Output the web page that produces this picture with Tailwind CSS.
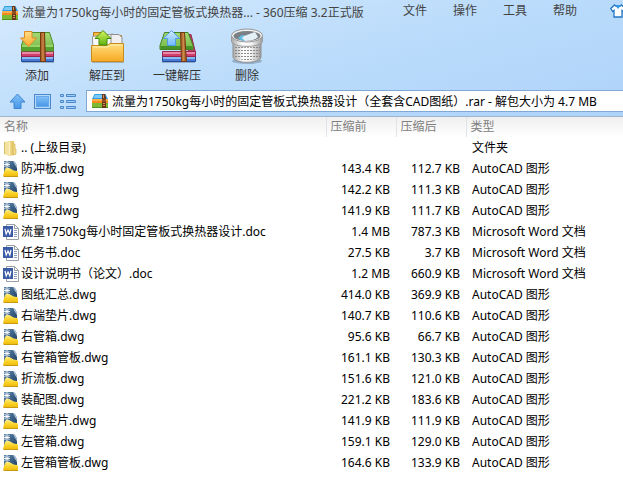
<!DOCTYPE html>
<html lang="zh-CN">
<head>
<meta charset="utf-8">
<meta name="viewport" content="width=device-width, initial-scale=1">
<title>360压缩</title>
<script src="https://cdn.jsdelivr.net/npm/@tailwindcss/browser@4"></script>
</head>
<body class="min-h-screen overflow-x-hidden bg-white font-['Noto_Sans','Noto_Sans_CJK_SC',sans-serif] text-[12px] leading-4 text-black">
<svg width="0" height="0" class="absolute" aria-hidden="true">
  <defs>
    <linearGradient id="green" x1="0" y1="0" x2="0" y2="1"><stop offset="0" stop-color="#a5d877"/><stop offset="1" stop-color="#74b944"/></linearGradient>
    <linearGradient id="orange" x1="0" y1="0" x2="0" y2="1"><stop offset="0" stop-color="#ffdc84"/><stop offset="1" stop-color="#fba92c"/></linearGradient>
    <linearGradient id="blue" x1="0" y1="0" x2="0" y2="1"><stop offset="0" stop-color="#cfeaff"/><stop offset="1" stop-color="#6fbafa"/></linearGradient>
    <linearGradient id="lime" x1="0" y1="0" x2="0" y2="1"><stop offset="0" stop-color="#d8f560"/><stop offset="1" stop-color="#62b414"/></linearGradient>
    <linearGradient id="folder" x1="0" y1="0" x2="0" y2="1"><stop offset="0" stop-color="#ffdf7d"/><stop offset="1" stop-color="#f7a823"/></linearGradient>
    <linearGradient id="strap" x1="0" y1="0" x2="1" y2="0"><stop offset="0" stop-color="#94511f"/><stop offset=".5" stop-color="#cd8746"/><stop offset="1" stop-color="#8a4819"/></linearGradient>
    <linearGradient id="steel" x1="0" y1="0" x2="1" y2="0"><stop offset="0" stop-color="#a8a8a8"/><stop offset=".35" stop-color="#ffffff"/><stop offset=".65" stop-color="#f4f4f4"/><stop offset="1" stop-color="#9c9c9c"/></linearGradient>
    <linearGradient id="nav" x1="0" y1="0" x2="0" y2="1"><stop offset="0" stop-color="#83c0f8"/><stop offset="1" stop-color="#4796e6"/></linearGradient>
    <linearGradient id="oldfolder" x1="0" y1="0" x2="1" y2="0"><stop offset="0" stop-color="#f3dd8c"/><stop offset="1" stop-color="#e0c366"/></linearGradient>
    <linearGradient id="cad" x1="0" y1="0" x2="1" y2="1"><stop offset="0" stop-color="#5f88ae"/><stop offset="1" stop-color="#1d3d60"/></linearGradient>
    <linearGradient id="gold" x1="0" y1="0" x2="0" y2="1"><stop offset="0" stop-color="#ffee8a"/><stop offset=".5" stop-color="#fbd52e"/><stop offset="1" stop-color="#efbd0c"/></linearGradient>
    <pattern id="mesh" width="3" height="3" patternUnits="userSpaceOnUse"><rect x="0" y="1" width="2" height="1" fill="#888"/></pattern>
  </defs>
  <symbol id="i-rar" viewBox="0 0 16 16">
    <path d="M2.500 1h11L16 6v1H0V6z" fill="#2f9fe8"/><path d="M3 2h7v3H1.500z" fill="#7cc9f8"/>
    <rect x="0" y="6" width="16" height="5" fill="#f58a1f"/><rect x="0" y="6" width="16" height="2" fill="#fcae4e"/>
    <rect x="0" y="10" width="16" height="5" fill="#7cba35"/><rect x="0" y="14" width="16" height="1" fill="#4f9220"/>
    <path d="M10 1h3l1 4v10h-4z" fill="#6b3517"/><path d="M11 2h1v3h-1zM11 10h2v1h-2zM11 12h2v1h-2z" fill="#d4965a"/>
    <rect x="10" y="6" width="4" height="3" fill="#8f4d22"/>
  </symbol>
  <symbol id="i-add" viewBox="0 0 36 36">
    <path d="M3 34h32v1H3z" fill="#2d3a5e" opacity=".3"/>
    <path d="M2.500 28.500h32v5h-32z" fill="#477bd4" stroke="#254a9b"/><path d="M3 29h31v2H3z" fill="#8db8f4"/>
    <path d="M2.500 23.500h32v5h-32z" fill="#cf3f6c" stroke="#98264c"/><path d="M3 24h31v2H3z" fill="#ea88a8"/>
    <path d="M7 4.500h23.500l4 12.500v6h-32v-6z" fill="url(#green)" stroke="#4a8f29"/><path d="M3 17h31v2H3z" fill="#9bd36a"/><path d="M3 19h31v4H3z" fill="#54a32e"/>
    <path d="M21.500 4.500h4l1 29h-5z" fill="url(#strap)" stroke="#74390f"/>
    <path d="M5.500 3.500H13v6.500h4.500L9.500 18.500 1.500 10h4z" fill="url(#orange)" stroke="#e08a22"/>
  </symbol>
  <symbol id="i-to" viewBox="0 0 36 36">
    <path d="M3 34h32v1H3z" fill="#54421b" opacity=".3"/>
    <path d="M4.500 4.500h8l2 3h18v18h-28z" fill="#f4ba44" stroke="#b97912"/>
    <path d="M3.500 8.500 24 6l3 18-23 2z" fill="#fafafa" stroke="#999"/><path d="M22 6.500h8l3 3v13H22z" fill="#efefef" stroke="#8f8f8f"/>
    <path d="M2.500 17.500H18l3-2h13.500v18h-32z" fill="url(#folder)" stroke="#c98a1f"/><path d="M4 19h15l3-2h11" fill="none" stroke="#fff0ad"/>
    <path d="M14 2.500 22 10.500h-4v6.500h-8v-6.500H6z" fill="url(#lime)" stroke="#418b0b"/>
  </symbol>
  <symbol id="i-one" viewBox="0 0 38 36">
    <path d="M4 34h33v1H4z" fill="#2d3a5e" opacity=".3"/>
    <path d="M31 6.500h2l4.500 18v4H30z" fill="#c13e66" stroke="#98264c"/>
    <path d="M4.500 28.500h33v5h-33z" fill="#477bd4" stroke="#254a9b"/><path d="M5 29h32v2H5z" fill="#8db8f4"/>
    <path d="M4.500 23.500h33v5h-33z" fill="#cf3f6c" stroke="#98264c"/><path d="M5 24h32v2H5z" fill="#ea88a8"/>
    <path d="M6.500 4.500H30l5 13v4h-33v-4z" fill="url(#green)" stroke="#3f8422"/><path d="M2.500 18h32v3h-32z" fill="#469326"/>
    <path d="M22.500 4.500h4l2 29h-5z" fill="url(#strap)" stroke="#74390f"/>
    <path d="M13.500 2.500 21.500 10.500h-4v7h-8v-7H5.500z" fill="url(#blue)" stroke="#4f9ae8"/>
  </symbol>
  <symbol id="i-bin" viewBox="0 0 36 36">
    <ellipse cx="18" cy="33" rx="15" ry="3" fill="#31455b" opacity=".3"/>
    <path d="M4 13v16c0 7 28 7 28 0V13z" fill="url(#steel)" stroke="#909090"/>
    <path d="M5 17c5 3 21 3 26 0v12c-3 4-23 4-26 0z" fill="url(#mesh)"/>
    <path d="M2.500 7.500v6c1 6.500 30 6.500 31 0v-6z" fill="url(#steel)" stroke="#999"/>
    <ellipse cx="18" cy="7.500" rx="15.500" ry="6.500" fill="#f1f1f1" stroke="#999"/>
    <ellipse cx="18" cy="8" rx="13.500" ry="5" fill="#7b8085"/>
    <path d="M9 10l4-3 5 1-2 5c-3 0-5-1-7-3z" fill="#64bde4"/><path d="M15 8l11-4 3 5c-3 3-8 4-13 4l-3-3z" fill="#e3f0f8"/>
  </symbol>
  <symbol id="i-folder" viewBox="0 0 16 16">
    <path d="M1 2 6 1v15l-5-2z" fill="#f4e3a0"/><path d="M1 2h1v12H1z" fill="#d9c067"/><path d="M6 1h5v14l-5 1z" fill="url(#oldfolder)"/><path d="M10 4h2v4l1 1v5l-3 1z" fill="#f0d888" stroke="#d3b553" stroke-width=".7"/><path d="M6.500 2v13" stroke="#fff5c8"/>
  </symbol>
  <symbol id="i-dwg" viewBox="0 0 16 16">
    <path d="M1 0h9c3 1 4 4 4 8v5H1z" fill="url(#cad)"/><path d="M10 0c3 1 4 4 4 7l-2-3z" fill="#a9c0d4"/>
    <path d="M4 0v7M1 3.500h6M1.500 1l5 5M6.500 1l-5 5" stroke="#fff" stroke-width=".9"/>
    <path d="M0 15 2 8c2-2 4-1 6 0s3 2 6 2l1 1v4z" fill="url(#gold)"/><path d="M0 15h15v1H1z" fill="#c79a12"/>
  </symbol>
  <symbol id="i-doc" viewBox="0 0 16 16">
    <path d="M3.500.5h8l4 4v11h-12z" fill="#fff" stroke="#9a9fa7"/><path d="M11.500.5v4h4" fill="none" stroke="#9a9fa7"/>
    <path d="M11 6.500h3M11 8.500h3M11 10.500h3M11 12.500h3" stroke="#8b9cc0"/>
    <rect x="0" y="2" width="10" height="11" fill="#3c5ba6"/><path d="m2 5 1.200 5L5 6l1.800 4L8 5" fill="none" stroke="#fff" stroke-width="1.200"/>
  </symbol>
</svg>

<header class="border-b border-[#9fb6cd] bg-linear-165 from-[#d6eafd] via-[#bbdcfb] via-50% to-[#aed3f9]">
  <div class="flex h-[25px] items-center pl-[2px] text-[#444]">
    <svg class="mr-1 size-4 shrink-0"><use href="#i-rar"/></svg>
    <h1 class="w-[381px] shrink-0 whitespace-nowrap">流量为1750kg每小时的固定管板式换热器... - 360压缩 3.2正式版</h1>
    <nav class="flex shrink-0 pb-[3px]">
      <button class="mr-[26px] w-6 whitespace-nowrap">文件</button>
      <button class="mr-[26px] w-6 whitespace-nowrap">操作</button>
      <button class="mr-[26px] w-6 whitespace-nowrap">工具</button>
      <button class="mr-[26px] w-6 whitespace-nowrap">帮助</button>
    </nav>
    <button class="mb-1 ml-[7px] w-4 shrink-0" aria-label="皮肤">
      <svg class="h-[14px] w-4" viewBox="0 0 16 14"><path d="M4.500 1 .8 4.500l2 3L4 6.500V13h8V6.500l1.200 1 2-3L11.500 1C10 3 6 3 4.500 1z" fill="#fff" stroke="#2375c4" stroke-width="1.300"/><path d="M5 1h6L8 5z" fill="#3396e6"/></svg>
    </button>
  </div>
  <div class="flex h-[61px] pl-[2px] pt-[3px] text-[#333]">
    <button class="flex w-[70px] flex-col items-center gap-1"><svg class="h-9 w-9"><use href="#i-add"/></svg><span>添加</span></button>
    <button class="flex w-[70px] flex-col items-center gap-1"><svg class="h-9 w-9"><use href="#i-to"/></svg><span>解压到</span></button>
    <button class="flex w-[70px] flex-col items-center gap-1"><svg class="h-9 w-[38px]"><use href="#i-one"/></svg><span>一键解压</span></button>
    <button class="flex w-[70px] flex-col items-center gap-1"><svg class="h-9 w-9"><use href="#i-bin"/></svg><span>删除</span></button>
  </div>
  <div class="flex h-[30px] items-center pl-[9px]">
    <button aria-label="上级目录" class="mr-2"><svg class="size-[17px]" viewBox="0 0 17 17"><path d="M8.500 1 16 9h-4v6.500H5V9H1z" fill="url(#nav)" stroke="#3e86d3"/></svg></button>
    <button aria-label="预览" class="mr-2"><svg class="h-[17px] w-[17px]" viewBox="0 0 17 17"><rect x=".5" y="1.500" width="16" height="14" fill="#b5d9fb" stroke="#4a88cb"/><rect x="2.500" y="3.500" width="12" height="10" fill="url(#nav)" stroke="#68a8e8"/></svg></button>
    <button aria-label="列表" class="mr-[10px]"><svg class="h-[17px] w-[17px]" viewBox="0 0 17 17"><g fill="#9fcdf8" stroke="#4a88cb"><path d="M1.500 1.500h3v2h-3zM1.500 7.500h3v2h-3zM1.500 13.500h3v2h-3z"/><path d="M7.500 1.500h9v2h-9zM7.500 7.500h9v2h-9zM7.500 13.500h9v2h-9z"/></g></svg></button>
    <label class="flex h-[22px] min-w-0 flex-1 items-center border border-r-0 border-[#7fa8d2] bg-white pl-[5px]">
      <svg class="mr-1 size-4 shrink-0"><use href="#i-rar"/></svg>
      <input aria-label="路径" class="min-w-0 flex-1 bg-transparent pt-px outline-none" value="流量为1750kg每小时的固定管板式换热器设计（全套含CAD图纸）.rar - 解包大小为 4.7 MB">
    </label>
  </div>
</header>

<table class="w-full table-fixed border-collapse">
  <colgroup><col class="w-[326px]"><col class="w-[70px]"><col class="w-[70px]"><col></colgroup>
  <thead class="bg-linear-to-b from-[#efefef] to-white text-left text-[#808080]">
    <tr class="h-5">
      <th class="p-0 pl-1 font-normal">名称</th>
      <th class="border-l border-[#e0e3e8] p-0 pl-1 font-normal">压缩前</th>
      <th class="border-l border-[#e0e3e8] p-0 pl-1 font-normal">压缩后</th>
      <th class="border-l border-[#e0e3e8] p-0 pl-1 font-normal">类型</th>
    </tr>
  </thead>
  <tbody id="files"></tbody>
</table>
<template id="row">
  <tr class="h-[21px] whitespace-nowrap">
    <td class="p-0 pl-[3px]"><div class="flex items-center gap-[2px]"><svg class="size-4 shrink-0"><use/></svg><span></span></div></td>
    <td class="p-0 pr-[6px] text-right"></td>
    <td class="p-0 pr-[6px] text-right"></td>
    <td class="p-0 pl-[6px]"></td>
  </tr>
</template>
<script>
const files = [
  ['folder', '.. (上级目录)', '', ''],
  ['dwg', '防冲板.dwg', '143.4 KB', '112.7 KB'],
  ['dwg', '拉杆1.dwg', '142.2 KB', '111.3 KB'],
  ['dwg', '拉杆2.dwg', '141.9 KB', '111.7 KB'],
  ['doc', '流量1750kg每小时固定管板式换热器设计.doc', '1.4 MB', '787.3 KB'],
  ['doc', '任务书.doc', '27.5 KB', '3.7 KB'],
  ['doc', '设计说明书（论文）.doc', '1.2 MB', '660.9 KB'],
  ['dwg', '图纸汇总.dwg', '414.0 KB', '369.9 KB'],
  ['dwg', '右端垫片.dwg', '140.7 KB', '110.6 KB'],
  ['dwg', '右管箱.dwg', '95.6 KB', '66.7 KB'],
  ['dwg', '右管箱管板.dwg', '161.1 KB', '130.3 KB'],
  ['dwg', '折流板.dwg', '151.6 KB', '121.0 KB'],
  ['dwg', '装配图.dwg', '221.2 KB', '183.6 KB'],
  ['dwg', '左端垫片.dwg', '141.9 KB', '111.9 KB'],
  ['dwg', '左管箱.dwg', '159.1 KB', '129.0 KB'],
  ['dwg', '左管箱管板.dwg', '164.6 KB', '133.9 KB'],
];
const kinds = { folder: '文件夹', dwg: 'AutoCAD 图形', doc: 'Microsoft Word 文档' };
const body = document.getElementById('files');
for (const [kind, name, before, after] of files) {
  const row = document.getElementById('row').content.cloneNode(true);
  row.querySelector('use').setAttribute('href', '#i-' + kind);
  row.querySelector('span').textContent = name;
  const cells = row.querySelectorAll('td');
  cells[1].textContent = before;
  cells[2].textContent = after;
  cells[3].textContent = kinds[kind];
  body.append(row);
}
</script>
</body>
</html>
